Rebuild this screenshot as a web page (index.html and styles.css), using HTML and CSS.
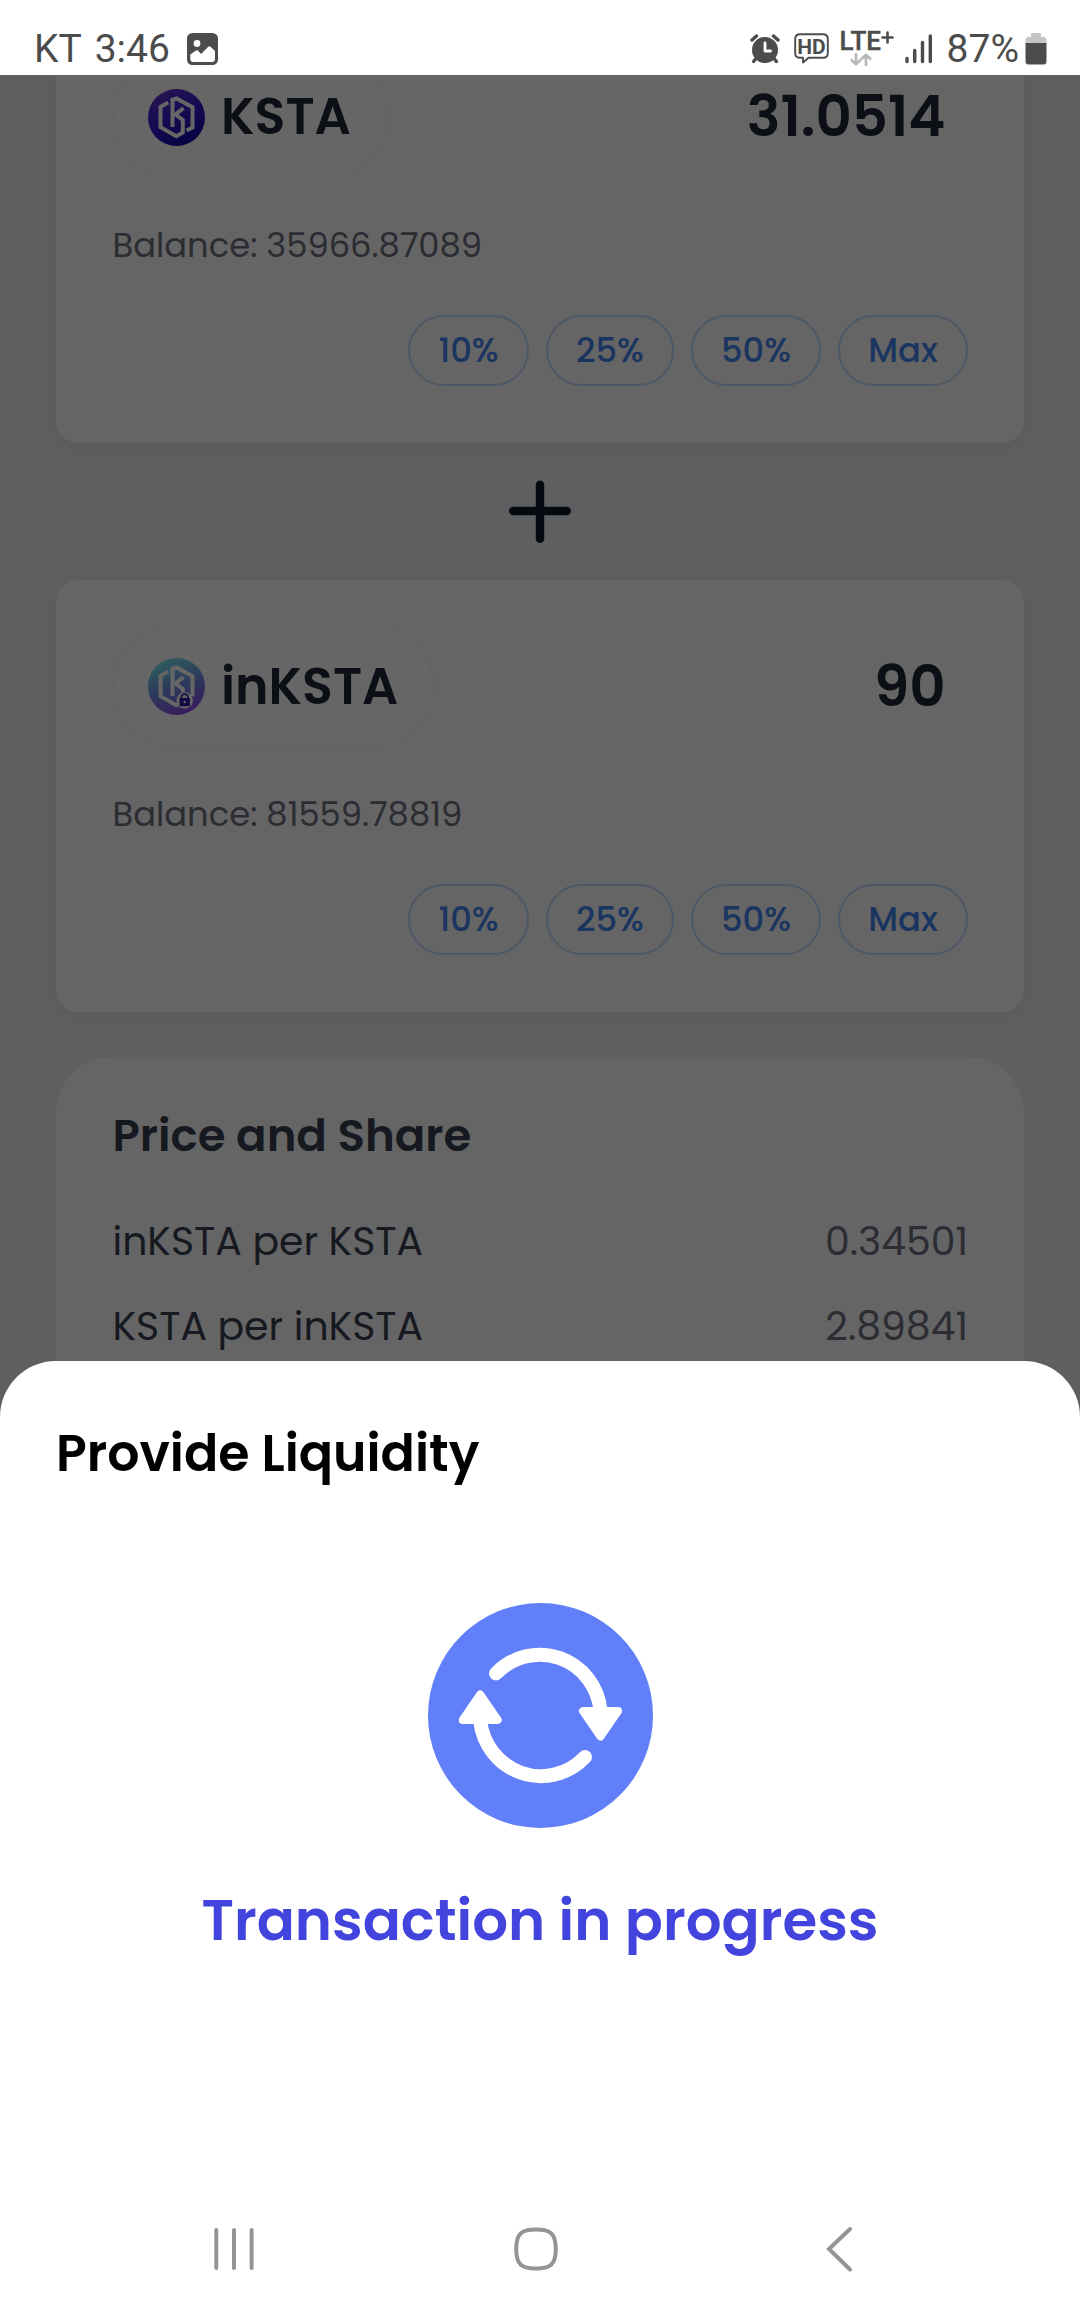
FILE: index.html
```html
<!DOCTYPE html>
<html lang="en">
<head>
<meta charset="utf-8">
<title>Provide Liquidity</title>
<link rel="stylesheet" href="styles.css">
</head>
<body>
<div class="screen">
  <header class="status">
    <span class="status-text">KT 3:46</span>
    <svg class="ico-image" width="31" height="32" viewBox="0 0 31 32"><rect width="31" height="32" rx="5.5" fill="#4c4c4c"/><circle cx="10" cy="10.500" r="3.400" fill="#fff"/><path d="M3.300 21.500 9 17.500q1-.6 2 0l3 3.500L21.500 13.500q1-.8 2 .2L28 18v8q0 3-3 3H6.300q-3 0-3-3z" fill="#fff"/></svg>
    <div class="status-right">
      <svg width="30" height="30" viewBox="0 0 30 30"><g stroke="#4c4c4c" stroke-width="3.400" stroke-linecap="round" fill="none"><path d="M2 6 6.500 2M28 6 23.500 2M5.500 25 3.600 27.500M24.500 25l1.900 2.500"/></g><circle cx="15" cy="16" r="13" fill="#4c4c4c"/><path d="M15 9v8h5.500" stroke="#fff" stroke-width="2.800" fill="none" stroke-linecap="round" stroke-linejoin="round"/></svg>
      <svg class="ico-hd" width="35" height="31" viewBox="0 0 35 31"><path d="M6 1.200h23q4.800 0 4.800 4.800v14q0 4.800-4.800 4.800H14.500L9 29.500V24.800H6q-4.800 0-4.800-4.800V6Q1.200 1.200 6 1.200z" fill="none" stroke="#4c4c4c" stroke-width="1.900" stroke-linejoin="round"/><text class="hd" x="17.500" y="20.500" text-anchor="middle">HD</text></svg>
      <div class="lte"><span class="lte-text">LTE<svg class="lte-plus" width="13" height="13" viewBox="0 0 13 13"><path d="M6.500 1.500v10M1.500 6.500h10" stroke="#4c4c4c" stroke-width="2.600" stroke-linecap="round"/></svg></span>
        <svg class="lte-arrows" width="22" height="13" viewBox="0 0 22 13"><path d="M6 1v10M1.800 7.300 6 11.300l4.200-4M16 12V2M11.800 5.700 16 1.700l4.200 4" fill="none" stroke="#b8b8b8" stroke-width="2.700" stroke-linecap="round" stroke-linejoin="round"/></svg></div>
      <svg class="ico-signal" width="28" height="30" viewBox="0 0 28 30"><path d="M2 24.500v3M9.700 16.500v11M17.500 8.500v19M25.300 2v25.500" stroke="#4c4c4c" stroke-width="3.400" stroke-linecap="round"/></svg>
      <span class="status-text pct">87%</span>
      <svg class="ico-batt" width="22" height="32" viewBox="0 0 22 32"><path d="M6 1.500Q6 0 7.500 0h7Q16 0 16 1.500V4h2.500q3 0 3 3v4H.5V7q0-3 3-3H6z" fill="#c4c4c4"/><path d="M.5 10h21v18.500q0 3-3 3h-15q-3 0-3-3z" fill="#4c4c4c"/></svg>
    </div>
  </header>

  <main class="content">
    <section class="card first">
      <div class="top">
        <div class="pill">
          <svg width="57" height="57" viewBox="0 0 57 57"><defs><linearGradient id="a" x1=".2" y1="0" x2=".7" y2="1"><stop offset="0" stop-color="#6036d0"/><stop offset=".5" stop-color="#3419cc"/><stop offset="1" stop-color="#0e06a4"/></linearGradient></defs><circle cx="28.500" cy="28.500" r="28.500" fill="url(#a)"/><path d="M20.200 13.500 12.500 17.800V38.200L28.300 47.200 34.800 43.500V31L27.500 25.500 35.500 19M24.500 38V10.800L28.500 9.500 44.500 18.200V38.500L38.500 41.500" fill="none" stroke="#fff" stroke-width="4"/></svg>
          <span class="token">KSTA</span>
        </div>
        <span class="amount">31.0514</span>
      </div>
      <div class="balance">Balance: 35966.87089</div>
      <div class="chips"><span class="chip c10">10%</span><span class="chip c25">25%</span><span class="chip c50">50%</span><span class="chip cmax">Max</span></div>
    </section>

    <div class="plus"><svg width="62" height="64" viewBox="0 0 62 64"><path d="M31 4.750v54M4.250 31h53.500" stroke="#111827" stroke-width="8.500" stroke-linecap="round"/></svg></div>

    <section class="card second">
      <div class="top">
        <div class="pill">
          <svg width="57" height="57" viewBox="0 0 57 57"><defs><linearGradient id="b" x1=".3" y1="0" x2=".7" y2="1"><stop offset=".05" stop-color="#74e0ea"/><stop offset=".5" stop-color="#6f90e4"/><stop offset="1" stop-color="#943eea"/></linearGradient></defs><circle cx="28.500" cy="28.500" r="28.500" fill="url(#b)"/><path d="M20.200 13.500 12.500 17.800V38.200L28.300 47.200 34.800 43.500M34.800 34V31L27.500 25.500 35.500 19M24.500 38V10.800L28.500 9.500 44.500 18.200V38.500" fill="none" stroke="#fff" stroke-width="4"/><circle cx="36.700" cy="42.500" r="8.300" fill="#fff"/><path d="M33.300 40.500V39.500a3.400 3.400 0 0 1 6.800 0v1" fill="none" stroke="#2c1fa8" stroke-width="1.600"/><rect x="31.500" y="40" width="10.400" height="8.300" rx="1" fill="#2c1fa8"/><circle cx="36.700" cy="44" r="1.200" fill="#fff"/></svg>
          <span class="token">inKSTA</span>
        </div>
        <span class="amount">90</span>
      </div>
      <div class="balance">Balance: 81559.78819</div>
      <div class="chips"><span class="chip c10">10%</span><span class="chip c25">25%</span><span class="chip c50">50%</span><span class="chip cmax">Max</span></div>
    </section>

    <section class="card share">
      <h2 class="share-title">Price and Share</h2>
      <div class="row"><span class="label">inKSTA per KSTA</span><span class="value">0.34501</span></div>
      <div class="row"><span class="label">KSTA per inKSTA</span><span class="value">2.89841</span></div>
    </section>
    <div class="scrim"></div>
  </main>

  <section class="sheet">
    <h1 class="sheet-title">Provide Liquidity</h1>
    <svg class="spinner" width="225" height="225" viewBox="0.5 0.5 225 225"><circle cx="113" cy="113" r="112.500" fill="#627ffa"/><g fill="none" stroke="#fff" stroke-width="14" stroke-linecap="round"><path d="M68.500 71A61 61.800 0 0 1 173 108"/><path d="M157.500 154.500A61 61.800 0 0 1 52.700 118"/></g><g fill="#fff" stroke="#fff" stroke-width="8" stroke-linejoin="round"><path d="M155.500 108.500h35L173 134z"/><path d="M70.200 117.500h-35L52.700 92z"/></g></svg>
    <p class="progress">Transaction in progress</p>
    <nav class="nav">
      <svg width="60" height="60" viewBox="0 0 60 60"><path d="M12.300 11v38M30 11v38M47.600 11v38" stroke="#949494" stroke-width="4" stroke-linecap="round"/></svg>
      <svg width="60" height="60" viewBox="0 0 60 60"><path d="M30 10.500C44 10.500 49.800 14 49.800 30S44 49.500 30 49.500 10.200 46 10.200 30 16 10.500 30 10.500z" fill="none" stroke="#949494" stroke-width="4"/></svg>
      <svg width="60" height="60" viewBox="0 0 60 60"><path d="M42 10 21 30l21 20.500" fill="none" stroke="#949494" stroke-width="4" stroke-linecap="round"/></svg>
    </nav>
  </section>
</div>
</body>
</html>
```
FILE: styles.css
```css
* { box-sizing: border-box; margin: 0; padding: 0; }

body {
  width: 1080px;
  height: 2316px;
  overflow: hidden;
  background: #fff;
  font-family: Poppins, Inter, "Open Sans", sans-serif;
}

svg { display: block; flex: none; }

.screen { position: relative; height: 2316px; display: flex; flex-direction: column; }

/* status bar */
.status {
  height: 75px;
  flex: none;
  padding: 22px 33px 0 34px;
  display: flex;
  align-items: center;
  font-family: Roboto, sans-serif;
  color: #4c4c4c;
  background: #fff;
}
.status-text { font-size: 39px; line-height: 50px; word-spacing: 4px; white-space: nowrap; }
.ico-image { margin-left: 17px; }
.status-right { margin-left: auto; display: flex; align-items: center; }
.ico-hd { margin-left: 14px; }
.hd { font: 700 21px Roboto, sans-serif; fill: #4c4c4c; }
.lte { width: 57px; height: 38px; margin-left: 11px; display: flex; flex-direction: column; }
.lte-text { display: flex; font-size: 26px; font-weight: 500; line-height: 23px; letter-spacing: 0; white-space: nowrap; -webkit-text-stroke: .4px #4c4c4c; }
.lte-plus { margin-top: 1px; }
.lte-arrows { margin-left: 10px; }
.ico-signal { margin-left: 8px; }
.pct { margin-left: 14px; }
.ico-batt { margin-left: 6px; }

/* page under the dialog */
.content {
  position: relative;
  height: 1350px;
  flex: none;
  overflow: hidden;
  padding: 0 56px;
  background: #ebedf1;
}
.card {
  padding: 46px 56px 57px;
  border-radius: 22px;
  background: #fcfcfc;
  box-shadow: 0 4px 22px rgba(30, 40, 60, .06);
}
.first { margin-top: -64px; }
.top { display: flex; align-items: center; justify-content: space-between; height: 120px; }
.pill {
  height: 120px;
  margin-left: 1px;
  padding: 0 34px 0 33px;
  display: flex;
  align-items: center;
  gap: 16px;
  border: 2px solid #f8f8f9;
  border-radius: 60px;
  background: #fff;
}
.token { font-size: 50.625px; font-weight: 600; line-height: 60px; color: #1f2937; }
.amount { padding-right: 22.500px; font-size: 56.250px; font-weight: 600; line-height: 70px; color: #1f2937; }
.second .token { padding-top: 1px; }
.second .amount { padding-top: 1px; }
.balance { margin-top: 49px; padding-left: .5px; font-size: 33.750px; line-height: 40px; color: #6b7280; }
.chips { margin-top: 49px; display: flex; justify-content: flex-end; gap: 17px; }
.chip {
  height: 71px;
  display: flex;
  align-items: center;
  justify-content: center;
  border: 2px solid #bfdbfe;
  border-radius: 36px;
  font-size: 33.750px;
  font-weight: 500;
  color: #4285f0;
}
.c10 { width: 121px; }
.c25 { width: 128px; }
.c50 { width: 130px; }
.cmax { width: 130px; }

.plus { height: 137px; display: flex; align-items: center; justify-content: center; }

.share { height: 500px; margin-top: 45px; padding: 49px 56px; border-radius: 56px; box-shadow: none; }
.share-title { margin-bottom: 33px; padding-left: .5px; font-size: 45px; font-weight: 600; line-height: 60px; color: #374151; }
.row { height: 85px; padding-left: .5px; display: flex; align-items: center; justify-content: space-between; font-size: 39.375px; }
.label { color: #374151; }
.value { color: #6b7280; }

.scrim { position: absolute; inset: 0; background: rgba(0, 0, 0, .6); }

/* bottom dialog */
.sheet {
  position: relative;
  margin-top: -64px;
  flex: 1;
  display: flex;
  flex-direction: column;
  align-items: center;
  padding-top: 53px;
  border-radius: 56px 56px 0 0;
  background: #fff;
}
.sheet-title { align-self: flex-start; margin-left: 56px; font-size: 50.625px; font-weight: 600; line-height: 80px; color: #000; }
.spinner { margin: 109px 0 0 1px; }
.progress { margin-top: 53px; font-size: 56.250px; font-weight: 600; line-height: 80px; color: #4343de; white-space: nowrap; }
.nav { align-self: stretch; margin-top: auto; padding: 0 0 37px 204px; display: flex; gap: 242px; }
```
